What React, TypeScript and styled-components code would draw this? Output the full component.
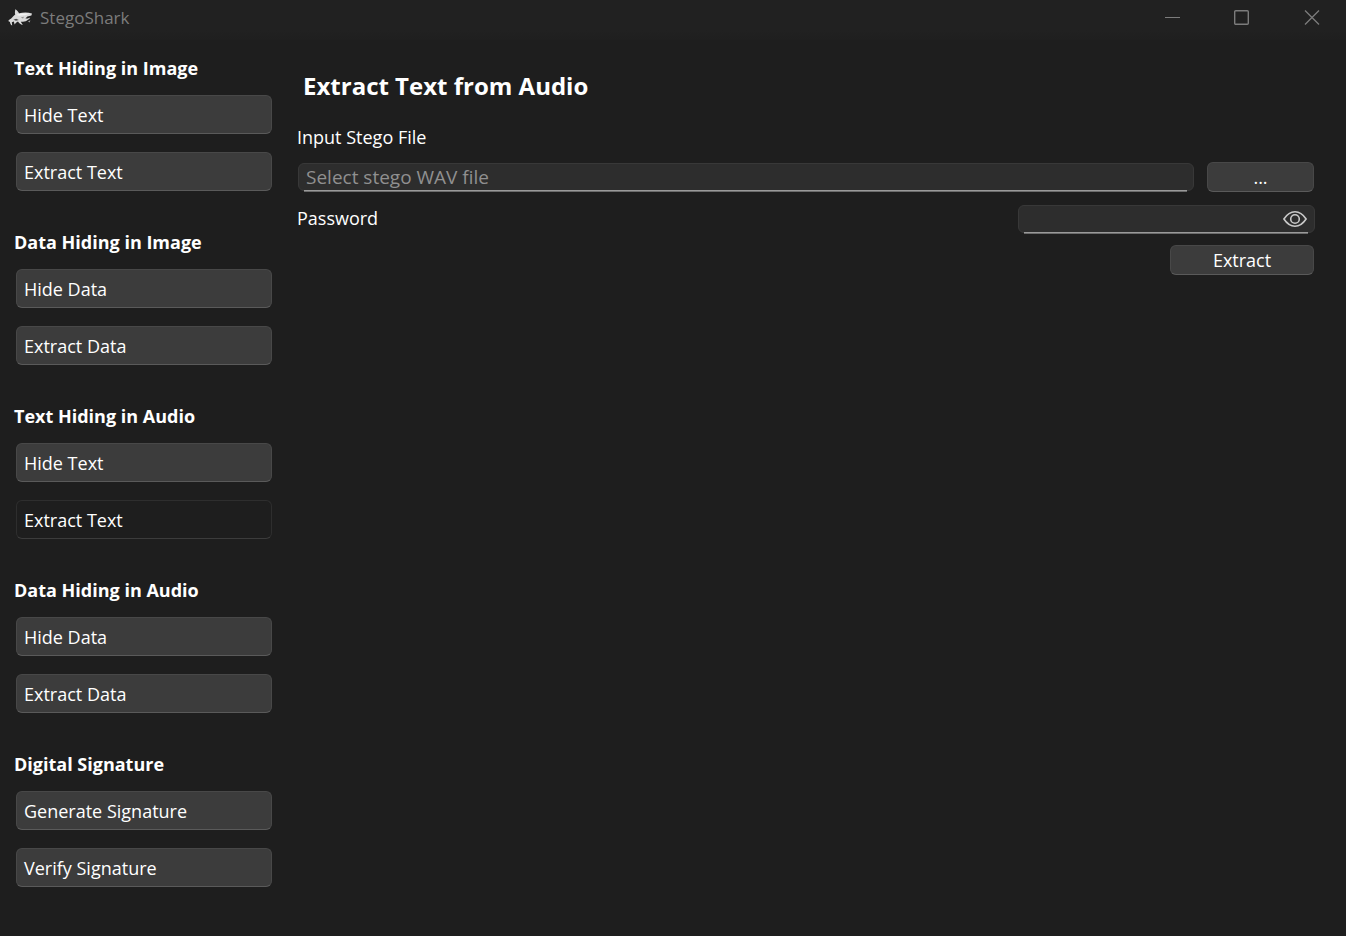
import React, { useState } from "react";
import styled, { createGlobalStyle } from "styled-components";

const GlobalStyle = createGlobalStyle`
  * { box-sizing: border-box; }
  body {
    margin: 0;
    background: #1e1e1e;
    color: #ffffff;
    font-family: "Segoe UI", "Open Sans", "Noto Sans", sans-serif;
    font-size: 18px;
    line-height: 28px;
  }
  button, input { font: inherit; color: inherit; }
`;

const Window = styled.div`
  display: flex;
  flex-direction: column;
  min-height: 100vh;
`;

const TitleBar = styled.header`
  display: flex;
  align-items: flex-start;
  height: 40px;
  background: linear-gradient(#212121 30px, #1f1f1f);
  color: #7c7c7c;
`;

const AppName = styled.div`
  display: flex;
  flex: 1;
  align-items: center;
  gap: 7px;
  height: 36px;
  padding-left: 8px;
  font-size: 17px;
`;

const CaptionButton = styled.button`
  display: grid;
  place-items: center;
  width: 70px;
  height: 34px;
  padding: 0;
  border: 0;
  background: transparent;
`;

const Body = styled.div`
  display: flex;
  flex: 1;
`;

const Sidebar = styled.nav`
  display: flex;
  flex-direction: column;
  gap: 37px;
  flex: 0 0 272px;
  padding: 14px 0 48px 14px;
`;

const Group = styled.section`
  display: flex;
  flex-direction: column;
`;

const GroupTitle = styled.h2`
  margin: 0 0 13px;
  font-size: 18px;
  line-height: 28px;
  font-weight: 700;
`;

const GroupItems = styled.div`
  display: flex;
  flex-direction: column;
  gap: 18px;
  padding-left: 2px;
`;

const PushButton = styled.button`
  height: 30px;
  padding: 0 7px;
  border: 1px solid #484848;
  border-bottom-color: #5a5a5a;
  border-radius: 6px;
  background: #3c3c3c;
  line-height: 26px;
`;

const NavButton = styled(PushButton)<{ $active: boolean }>`
  height: 39px;
  text-align: left;
  ${(p) =>
    p.$active &&
    "background: #1e1e1e; border-color: #2e2e2e; border-bottom-color: #3c3c3c;"}
`;

const BrowseButton = styled(PushButton)`
  width: 107px;
`;

const ExtractButton = styled(PushButton)`
  width: 144px;
`;

const Main = styled.main`
  flex: 1;
  min-width: 0;
  padding: 30px 32px 0 25px;
`;

const PageTitle = styled.h1`
  margin: 0 0 21px;
  padding-left: 6px;
  font-size: 24px;
  line-height: 32px;
  font-weight: 700;
`;

const Form = styled.form`
  display: flex;
  flex-direction: column;
`;

const FileRow = styled.div`
  display: flex;
  gap: 13px;
  padding: 11px 0 12px 1px;
`;

const PasswordRow = styled.div`
  display: flex;
  justify-content: space-between;
  align-items: flex-start;
  height: 30px;
  margin-bottom: 11px;
`;

const Actions = styled.div`
  display: flex;
  justify-content: flex-end;
`;

const Field = styled.div`
  position: relative;
  display: flex;
  align-items: center;
  height: 28px;
  border: 1px solid #383838;
  border-radius: 6px;
  background: #2d2d2d;

  &::after {
    content: "";
    position: absolute;
    right: 6px;
    bottom: -2px;
    left: 5px;
    height: 2px;
    background: linear-gradient(#9a9a9a 50%, #6c6c6c 50%);
  }
`;

const FileField = styled(Field)`
  flex: 1;
  margin-top: 1px;
`;

const PasswordField = styled(Field)`
  width: 297px;
  margin: 1px -1px 0 0;
`;

const TextInput = styled.input`
  flex: 1;
  min-width: 0;
  height: 26px;
  padding: 0 7px;
  border: 0;
  outline: 0;
  background: transparent;
  font-size: 19px;
  &::placeholder { color: #909090; opacity: 1; }
`;

const RevealButton = styled.button`
  display: grid;
  width: 24px;
  height: 18px;
  margin-right: 7px;
  padding: 0;
  border: 0;
  background: transparent;
`;

const SharkIcon = () => (
  <svg width="25" height="18" viewBox="0 0 25 18" aria-hidden="true">
    <path
      d="M7.2 .3 C9 1.2 10.2 2.9 11.2 4.3 C15 3.4 20 3.2 24 4.6 L23.4 6.6 L19.4 7.6 L17.4 9.6 L19.8 9.6 L22.2 8.6 C21.6 9.9 20.4 10.7 19 11.4 C17 12.6 14.6 13 12.8 12.8 L14.8 16 C12.6 15.8 11.2 14.4 10 12.6 C8.8 13.2 7.2 14.6 6.6 15.6 L5.8 12.4 L3.8 13.2 L4.2 16.6 C2.7 15.8 2 14.3 2 13 L.2 12.1 C1.3 10.4 2.5 10.4 3.9 8.8 C5 7.3 6 6.2 7.2 5.4 C6.5 3.5 7.3 2 7.2 .3Z"
      fill="#dadada"
    />
    <path d="M8 5.8 L14 4.6 L22 4.6 L17 6.3 L11 6.8Z" fill="#f2f2f2" />
    <path d="M5.4 10.8 L8.2 9.8 L10.8 11 L8 11.8Z" fill="#4a4a4a" />
    <path d="M12.8 8.6 L16 7.8 L15 9.6Z" fill="#8c8c8c" />
    <path d="M20 12.4 L22.4 11.2 L21.6 13.6Z" fill="#a8a8a8" />
  </svg>
);

const EyeIcon = () => (
  <svg width="24" height="18" viewBox="0 0 24 18" fill="none" stroke="#c9c9c9" strokeWidth="1.6" aria-hidden="true">
    <path d="M.9 9 C4.2 4 8 1.8 12 1.8 S19.8 4 23.1 9 C19.8 14 16 16.2 12 16.2 S4.2 14 .9 9Z" />
    <circle cx="12" cy="9" r="4.3" />
  </svg>
);

const groups = [
  { title: "Text Hiding in Image", items: ["Hide Text", "Extract Text"] },
  { title: "Data Hiding in Image", items: ["Hide Data", "Extract Data"] },
  { title: "Text Hiding in Audio", items: ["Hide Text", "Extract Text"] },
  { title: "Data Hiding in Audio", items: ["Hide Data", "Extract Data"] },
  { title: "Digital Signature", items: ["Generate Signature", "Verify Signature"] },
];

export default function App() {
  const [active, setActive] = useState("Text Hiding in Audio/Extract Text");
  const [revealed, setRevealed] = useState(false);

  return (
    <Window>
      <GlobalStyle />
      <TitleBar>
        <AppName>
          <SharkIcon />
          <span>StegoShark</span>
        </AppName>
        <CaptionButton aria-label="Minimize">
          <svg width="18" height="16" stroke="currentColor">
            <path d="M3 8.5H18" />
          </svg>
        </CaptionButton>
        <CaptionButton aria-label="Maximize">
          <svg width="16" height="16" fill="none" stroke="currentColor" strokeWidth="1.4">
            <rect x="1.7" y="1.7" width="13.6" height="13.6" rx="1" />
          </svg>
        </CaptionButton>
        <CaptionButton aria-label="Close">
          <svg width="18" height="16" stroke="currentColor" strokeWidth="1.3">
            <path d="M3 1.5L17 15.5M17 1.5L3 15.5" />
          </svg>
        </CaptionButton>
      </TitleBar>
      <Body>
        <Sidebar>
          {groups.map((group) => (
            <Group key={group.title}>
              <GroupTitle>{group.title}</GroupTitle>
              <GroupItems>
                {group.items.map((item) => {
                  const id = `${group.title}/${item}`;
                  return (
                    <NavButton key={id} type="button" $active={id === active} onClick={() => setActive(id)}>
                      {item}
                    </NavButton>
                  );
                })}
              </GroupItems>
            </Group>
          ))}
        </Sidebar>
        <Main>
          <PageTitle>Extract Text from Audio</PageTitle>
          <Form onSubmit={(e) => e.preventDefault()}>
            <label htmlFor="stego-file">Input Stego File</label>
            <FileRow>
              <FileField>
                <TextInput id="stego-file" placeholder="Select stego WAV file" />
              </FileField>
              <BrowseButton type="button" aria-label="Browse">...</BrowseButton>
            </FileRow>
            <PasswordRow>
              <label htmlFor="password">Password</label>
              <PasswordField>
                <TextInput id="password" type={revealed ? "text" : "password"} />
                <RevealButton type="button" aria-label="Show password" onClick={() => setRevealed(!revealed)}>
                  <EyeIcon />
                </RevealButton>
              </PasswordField>
            </PasswordRow>
            <Actions>
              <ExtractButton type="submit">Extract</ExtractButton>
            </Actions>
          </Form>
        </Main>
      </Body>
    </Window>
  );
}
